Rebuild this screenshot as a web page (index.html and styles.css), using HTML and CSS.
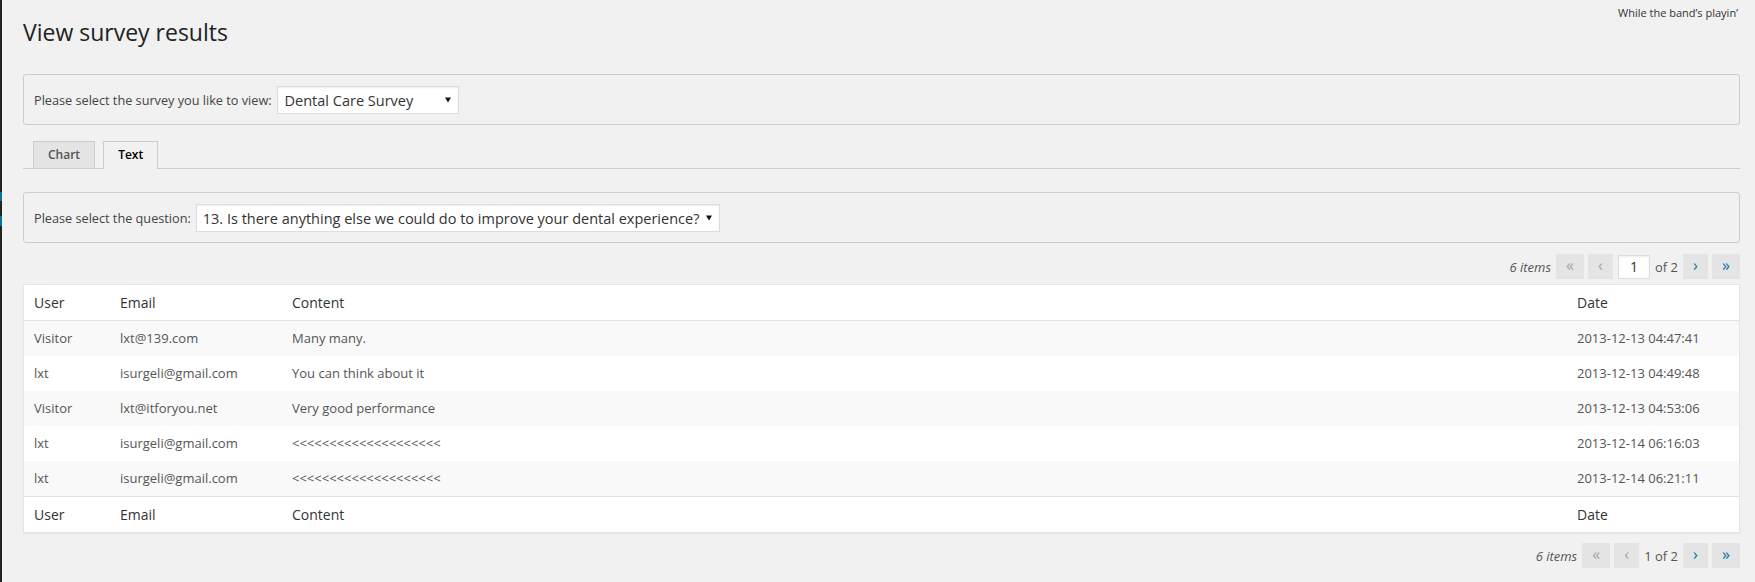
FILE: index.html
```html
<!DOCTYPE html>
<html>
<head>
<meta charset="utf-8">
<title>View survey results</title>
<link rel="stylesheet" href="styles.css">
</head>
<body>
<div class="admin">
  <div class="edge"><span class="mark mark-one"></span><span class="mark mark-two"></span></div>
  <div class="main">
    <p class="dolly">While the band’s playin’</p>
    <div class="wrap">
      <h2 class="page-title">View survey results</h2>

      <div class="panel">
        <span class="label">Please select the survey you like to view:</span>
        <div class="select select-survey"><span class="select-text">Dental Care Survey</span><svg class="arrow" width="6" height="6" viewBox="0 0 6 6"><path d="M0 0.5H6L3 5.5Z" fill="#111"/></svg></div>
      </div>

      <div class="tabs">
        <span class="tab">Chart</span>
        <span class="tab tab-active">Text</span>
      </div>

      <div class="panel panel-question">
        <span class="label">Please select the question:</span>
        <div class="select select-question"><span class="select-text">13. Is there anything else we could do to improve your dental experience?</span><svg class="arrow" width="6" height="6" viewBox="0 0 6 6"><path d="M0 0.5H6L3 5.5Z" fill="#111"/></svg></div>
      </div>

      <div class="tablenav tablenav-top">
        <span class="items">6 items</span>
        <span class="pbtn pbtn-wide disabled">«</span>
        <span class="pbtn disabled">‹</span>
        <span class="page-input">1</span>
        <span class="of">of 2</span>
        <span class="pbtn">›</span>
        <span class="pbtn pbtn-wide">»</span>
      </div>

      <table class="list">
        <thead>
          <tr><th class="c-user">User</th><th class="c-email">Email</th><th>Content</th><th class="c-date">Date</th></tr>
        </thead>
        <tbody>
          <tr class="alt"><td>Visitor</td><td>lxt@139.com</td><td>Many many.</td><td>2013-12-13 04:47:41</td></tr>
          <tr><td>lxt</td><td>isurgeli@gmail.com</td><td>You can think about it</td><td>2013-12-13 04:49:48</td></tr>
          <tr class="alt"><td>Visitor</td><td>lxt@itforyou.net</td><td>Very good performance</td><td>2013-12-13 04:53:06</td></tr>
          <tr><td>lxt</td><td>isurgeli@gmail.com</td><td>&lt;&lt;&lt;&lt;&lt;&lt;&lt;&lt;&lt;&lt;&lt;&lt;&lt;&lt;&lt;&lt;&lt;&lt;&lt;&lt;</td><td>2013-12-14 06:16:03</td></tr>
          <tr class="alt"><td>lxt</td><td>isurgeli@gmail.com</td><td>&lt;&lt;&lt;&lt;&lt;&lt;&lt;&lt;&lt;&lt;&lt;&lt;&lt;&lt;&lt;&lt;&lt;&lt;&lt;&lt;</td><td>2013-12-14 06:21:11</td></tr>
        </tbody>
        <tfoot>
          <tr><th>User</th><th>Email</th><th>Content</th><th>Date</th></tr>
        </tfoot>
      </table>

      <div class="tablenav tablenav-bottom">
        <span class="items">6 items</span>
        <span class="pbtn pbtn-wide disabled">«</span>
        <span class="pbtn disabled">‹</span>
        <span class="of">1 of 2</span>
        <span class="pbtn">›</span>
        <span class="pbtn pbtn-wide">»</span>
      </div>
    </div>
  </div>
</div>
</body>
</html>
```

FILE: styles.css
```css
html, body {
  margin: 0;
  padding: 0;
  background: #f1f1f1;
}

body {
  font-family: "Open Sans", "Liberation Sans", sans-serif;
  font-size: 13px;
  color: #444;
  width: 1755px;
  height: 582px;
  overflow: hidden;
}

.admin {
  display: flex;
  height: 582px;
}

.edge {
  width: 2px;
  flex: 0 0 2px;
  background: #222;
  display: flex;
  flex-direction: column;
}

.mark {
  display: block;
  width: 2px;
  background: #0074a2;
}

.mark-one {
  margin-top: 192px;
  height: 9px;
}

.mark-two {
  margin-top: 15px;
  height: 10px;
}

.main {
  flex: 1;
  padding: 0 15px 0 21px;
}

.dolly {
  float: right;
  margin: 5px 2px 0 0;
  font-size: 11px;
  line-height: 16px;
  color: #333;
}

.page-title {
  margin: 0;
  padding: 18px 0 0 0;
  font-size: 23px;
  line-height: 29px;
  font-weight: 400;
  color: #222;
}

.panel {
  margin-top: 27px;
  border: 1px solid #ccc;
  border-radius: 3px;
  padding: 11px 10px 10px 10px;
  display: flex;
  align-items: center;
  gap: 5px;
}

.panel-question {
  margin-top: 23px;
}

.label {
  font-size: 12.7px;
  color: #444;
}

.select {
  box-sizing: border-box;
  height: 28px;
  background: #fff;
  border: 1px solid #ddd;
  box-shadow: inset 0 1px 2px rgba(0, 0, 0, 0.07);
  display: flex;
  align-items: center;
  justify-content: space-between;
  font-size: 14.5px;
  color: #333;
}

.select-survey {
  width: 182px;
  padding: 0 0 0 7px;
}

.select-question {
  width: 524px;
  padding: 0 0 0 6px;
}

.select-text {
  white-space: nowrap;
}

.arrow {
  margin-right: 7px;
  flex: 0 0 auto;
}

.tabs {
  margin-top: 16px;
  display: flex;
  align-items: flex-end;
  gap: 8px;
  padding-left: 10px;
  border-bottom: 1px solid #ccc;
  height: 27px;
}

.tab {
  box-sizing: border-box;
  height: 27px;
  padding: 0 14px;
  border: 1px solid #ccc;
  border-bottom: none;
  background: #e4e4e4;
  color: #555;
  font-size: 12px;
  font-weight: 600;
  line-height: 25px;
}

.tab-active {
  height: 28px;
  margin-bottom: -1px;
  background: #f1f1f1;
  color: #000;
}

.tablenav {
  display: flex;
  justify-content: flex-end;
  align-items: center;
  height: 25px;
  gap: 4px;
  color: #555;
}

.tablenav-top {
  margin-top: 11px;
}

.tablenav-bottom {
  margin-top: 10px;
}

.items {
  font-style: italic;
  font-size: 13px;
  margin-right: 1px;
}

.pbtn {
  box-sizing: border-box;
  width: 25px;
  height: 25px;
  background: #e4e4e4;
  color: #0074a2;
  font-size: 16px;
  line-height: 22px;
  text-align: center;
}

.pbtn-wide {
  width: 28px;
}

.pbtn.disabled {
  color: #a0a5aa;
}

.page-input {
  box-sizing: border-box;
  width: 32px;
  height: 24px;
  background: #fff;
  border: 1px solid #ddd;
  box-shadow: inset 0 1px 2px rgba(0, 0, 0, 0.07);
  text-align: center;
  font-size: 14px;
  line-height: 22px;
  color: #333;
  margin-left: 1px;
}

.of {
  font-size: 13px;
  padding: 0 1px;
}

.list {
  margin-top: 5px;
  width: 100%;
  border-collapse: separate;
  border-spacing: 0;
  background: #fff;
  border: 1px solid #e5e5e5;
  box-shadow: 0 1px 1px rgba(0, 0, 0, 0.04);
  table-layout: fixed;
}

.list th,
.list td {
  text-align: left;
  padding: 8px 10px;
  line-height: 19px;
  white-space: nowrap;
}

.list th {
  font-size: 14px;
  font-weight: 400;
  color: #333;
}

.list thead th {
  border-bottom: 1px solid #e1e1e1;
}

.list tfoot th {
  border-top: 1px solid #e1e1e1;
}

.list td {
  font-size: 13px;
  color: #555;
}

.list tr.alt td {
  background: #f9f9f9;
}

.c-user {
  width: 66px;
}

.c-email {
  width: 152px;
}

.c-date {
  width: 152px;
}
```
